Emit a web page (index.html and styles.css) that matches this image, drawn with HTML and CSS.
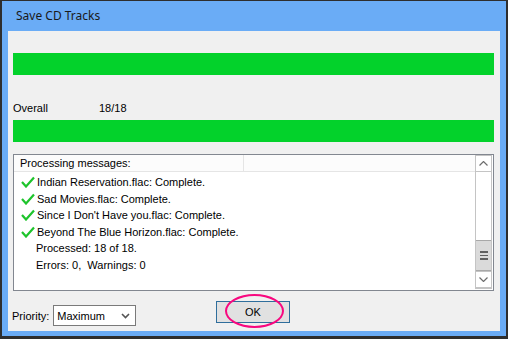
FILE: index.html
```html
<!DOCTYPE html>
<html lang="en">
<head>
    <meta charset="UTF-8">
    <title>Save CD Tracks</title>
    <link rel="stylesheet" href="styles.css">
</head>
<body>
    <div class="window">
        <div class="titlebar">Save CD Tracks</div>
        <div class="client">
            <div class="bar"></div>
            <div class="info">
                <span class="info-label">Overall</span>
                <span class="info-count">18/18</span>
            </div>
            <div class="bar"></div>
            <div class="listbox">
                <div class="list-main">
                    <div class="list-header">
                        <div class="header-cell">Processing messages:</div>
                        <div class="header-rest"></div>
                    </div>
                    <div class="rows">
                        <div class="row"><svg class="check" width="14" height="12" viewBox="0 0 14 12"><polyline points="1,6 5,10.5 13,1.5"/></svg>Indian Reservation.flac: Complete.</div>
                        <div class="row"><svg class="check" width="14" height="12" viewBox="0 0 14 12"><polyline points="1,6 5,10.5 13,1.5"/></svg>Sad Movies.flac: Complete.</div>
                        <div class="row"><svg class="check" width="14" height="12" viewBox="0 0 14 12"><polyline points="1,6 5,10.5 13,1.5"/></svg>Since I Don't Have you.flac: Complete.</div>
                        <div class="row"><svg class="check" width="14" height="12" viewBox="0 0 14 12"><polyline points="1,6 5,10.5 13,1.5"/></svg>Beyond The Blue Horizon.flac: Complete.</div>
                        <div class="row plain">Processed: 18 of 18.</div>
                        <div class="row plain">Errors: 0,&nbsp; Warnings: 0</div>
                    </div>
                </div>
                <div class="scrollbar">
                    <div class="sb-btn">
                        <svg width="9" height="5" viewBox="0 0 9 5"><polyline points="0.5,4.5 4.5,0.5 8.5,4.5"/></svg>
                    </div>
                    <div class="sb-track">
                        <div class="sb-thumb">
                            <span></span><span></span><span></span>
                        </div>
                    </div>
                    <div class="sb-btn">
                        <svg width="9" height="5" viewBox="0 0 9 5"><polyline points="0.5,0.5 4.5,4.5 8.5,0.5"/></svg>
                    </div>
                </div>
            </div>
            <div class="footer">
                <div class="priority">
                    <span class="priority-label">Priority:</span>
                    <div class="dropdown">
                        <span>Maximum</span>
                        <svg width="9" height="6" viewBox="0 0 9 6"><polyline points="1,1 4.5,4.5 8,1"/></svg>
                    </div>
                </div>
                <div class="ok-wrap">
                    <button class="ok-btn">OK</button>
                    <div class="highlight"></div>
                </div>
                <div></div>
            </div>
        </div>
    </div>
</body>
</html>
```

FILE: styles.css
```css
body {
    margin: 0;
    font-family: "Liberation Sans", Arial, sans-serif;
    font-size: 11px;
    color: #000;
}
.window {
    width: 508px;
    height: 339px;
    box-sizing: border-box;
    background: #6aacf6;
    border: 2px solid #2e2e2e;
    border-top-width: 1px;
    border-bottom-width: 3px;
    padding: 0 6px 5px 6px;
    display: flex;
    flex-direction: column;
}
.titlebar {
    height: 30px;
    line-height: 29px;
    padding-left: 8px;
    font-family: "Noto Sans", "Liberation Sans", sans-serif;
    font-size: 12px;
    color: #1a1a1a;
}
.client {
    flex: 1;
    background: #f0f0f0;
    padding: 22px 6px 0 5px;
}
.bar {
    height: 22px;
    background: #03d22b;
}
.info {
    display: flex;
    height: 16px;
    line-height: 16px;
    margin: 25px 0 4px 0;
}
.info-label {
    width: 86px;
}
.listbox {
    margin-top: 12px;
    height: 137px;
    box-sizing: border-box;
    border: 1px solid #828790;
    background: #fff;
    display: flex;
}
.list-main {
    flex: 1;
}
.list-header {
    display: flex;
    height: 16px;
    background: #fcfcfc;
    border-bottom: 1px solid #e5e5e5;
}
.header-cell {
    width: 223px;
    padding-left: 6px;
    line-height: 16px;
    border-right: 1px solid #e5e5e5;
}
.rows {
    padding-top: 2px;
}
.row {
    height: 16.6px;
    line-height: 16.6px;
    display: flex;
    align-items: center;
    padding-left: 7px;
    white-space: nowrap;
}
.row.plain {
    padding-left: 22px;
}
.check {
    margin-right: 2px;
    fill: none;
    stroke: #1ec42c;
    stroke-width: 2.2;
}
.scrollbar {
    width: 17px;
    margin: 0 1px 1px 0;
    display: flex;
    flex-direction: column;
    border: 1px solid #c4c4c4;
    border-top: none;
    box-sizing: border-box;
}
.sb-btn {
    height: 17px;
    box-sizing: border-box;
    border: 1px solid #c4c4c4;
    border-left: none;
    border-right: none;
    display: flex;
    align-items: center;
    justify-content: center;
    background: #fff;
}
.sb-btn:first-child {
    border-top: 1px solid #c4c4c4;
}
.sb-btn svg {
    fill: none;
    stroke: #6e6e6e;
    stroke-width: 1.2;
}
.sb-track {
    flex: 1;
    display: flex;
    flex-direction: column;
    justify-content: flex-end;
}
.sb-thumb {
    height: 31px;
    box-sizing: border-box;
    background: #dadada;
    border-top: 1px solid #a8a8a8;
    border-bottom: 1px solid #a8a8a8;
    display: flex;
    flex-direction: column;
    align-items: center;
    justify-content: center;
    gap: 2px;
}
.sb-thumb span {
    width: 8px;
    height: 1.5px;
    background: #606060;
}
.footer {
    display: grid;
    grid-template-columns: 1fr auto 1fr;
    align-items: start;
    margin-top: 10px;
}
.priority {
    display: flex;
    align-items: center;
    margin-top: 4px;
    margin-left: -1px;
}
.priority-label {
    margin-right: 4px;
}
.dropdown {
    width: 83px;
    height: 21px;
    box-sizing: border-box;
    border: 1px solid #7a7a7a;
    background: #fff;
    display: flex;
    align-items: center;
    justify-content: space-between;
    padding: 0 5px 0 3px;
}
.dropdown svg {
    fill: none;
    stroke: #555;
    stroke-width: 1.6;
}
.ok-wrap {
    position: relative;
    margin-left: -1px;
}
.ok-btn {
    width: 74px;
    height: 22px;
    box-sizing: border-box;
    border: 1px solid #2f6e9c;
    background: #e1e1e1;
    font-family: inherit;
    font-size: 11px;
    color: #000;
    padding: 0;
}
.highlight {
    position: absolute;
    left: 9px;
    top: -7px;
    width: 59px;
    height: 34px;
    box-sizing: border-box;
    border: 2px solid #f8077f;
    border-radius: 50%;
}
```
